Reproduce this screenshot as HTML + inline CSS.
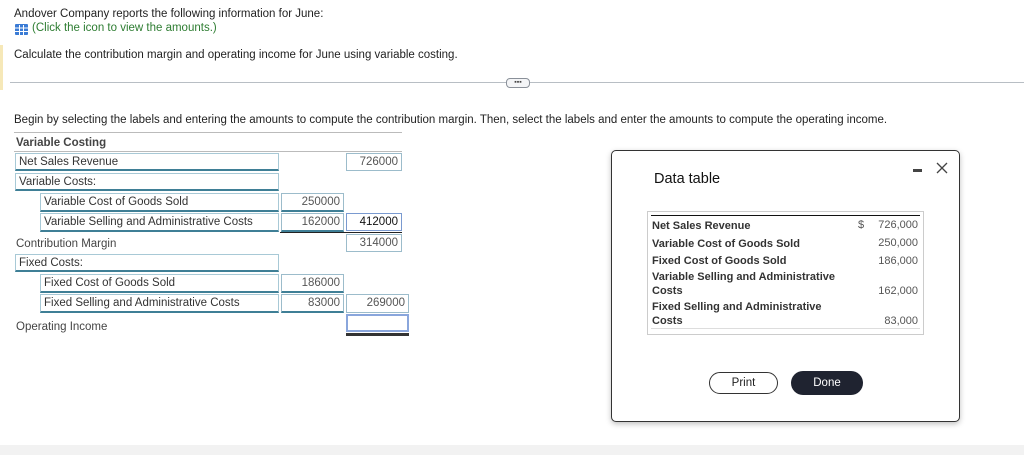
<!DOCTYPE html>
<html><head><style>
body{margin:0;width:1024px;height:455px;position:relative;background:#fff;font-family:"Liberation Sans",Arial,sans-serif;color:#222;overflow:hidden}
.a{position:absolute;white-space:nowrap}
.t{font-size:11.5px}
.box{position:absolute;border:1px solid #6fa3b5;box-sizing:border-box;font-size:11.5px;color:#333;padding:2px 3px;line-height:13px;background:#fff}
.lbl{border-color:#a8c9d6;border-bottom:2px solid #3f7f96}
.num{text-align:right;border-color:#9cbccb;color:#555}
.dt{font-size:11px;font-weight:bold;color:#333}
.dn{font-size:11px;color:#555;text-align:right}
</style></head><body>
<div class="a t" style="left:14px;top:8px">Andover Company reports the following information for June:</div>
<svg class="a" style="left:15px;top:24px" width="13" height="11"><rect x="0" y="0" width="13" height="11" rx="1" fill="#3a7bd5"/><g stroke="#fff" stroke-width="1"><line x1="0" y1="4" x2="13" y2="4"/><line x1="0" y1="7.5" x2="13" y2="7.5"/><line x1="4.5" y1="1" x2="4.5" y2="11"/><line x1="8.5" y1="1" x2="8.5" y2="11"/></g></svg>
<div class="a t" style="left:32px;top:22px;color:#2e7d32">(Click the icon to view the amounts.)</div>
<div class="a" style="left:0;top:45px;width:3px;height:45px;background:#f6e8b8"></div>
<div class="a t" style="left:14px;top:49px">Calculate the contribution margin and operating income for June using variable costing.</div>
<div class="a" style="left:10px;top:82px;width:1014px;height:1px;background:#b8bec4"></div>
<div class="a" style="left:506px;top:78px;width:22px;height:8px;border:1px solid #8a9099;border-radius:4px;background:#f4f5f7;font-size:7px;line-height:7px;text-align:center;color:#444">▪▪▪</div>
<div class="a t" style="left:14px;top:114px">Begin by selecting the labels and entering the amounts to compute the contribution margin. Then, select the labels and enter the amounts to compute the operating income.</div>
<div class="a" style="left:14px;top:132px;width:388px;height:1px;background:#bbb"></div>
<div class="a" style="left:16px;top:137px;font-size:11.5px;font-weight:bold;color:#444">Variable Costing</div>
<div class="a" style="left:14px;top:151px;width:388px;height:1px;background:#bbb"></div>

<div class="box lbl" style="left:15px;top:153px;width:264px;height:18px">Net Sales Revenue</div>
<div class="box num" style="left:346px;top:153px;width:56px;height:18px">726000</div>
<div class="box lbl" style="left:15px;top:173px;width:264px;height:18px">Variable Costs:</div>
<div class="box lbl" style="left:40px;top:193px;width:239px;height:19px">Variable Cost of Goods Sold</div>
<div class="box num" style="left:281px;top:193px;width:63px;height:19px;border-bottom:2px solid #3f7f96">250000</div>
<div class="box lbl" style="left:40px;top:213px;width:239px;height:19px">Variable Selling and Administrative Costs</div>
<div class="box num" style="left:281px;top:213px;width:63px;height:19px;border-bottom:2px solid #3f7f96">162000</div>
<div class="box num" style="left:346px;top:213px;width:56px;height:18px;border-color:#7a9ad0;color:#111">412000</div>
<div class="a" style="left:280px;top:232px;width:122px;height:1px;background:#222"></div>
<div class="a t" style="left:16px;top:238px;color:#444">Contribution Margin</div>
<div class="box num" style="left:346px;top:234px;width:56px;height:18px">314000</div>
<div class="box lbl" style="left:15px;top:254px;width:264px;height:18px">Fixed Costs:</div>
<div class="box lbl" style="left:40px;top:274px;width:239px;height:19px">Fixed Cost of Goods Sold</div>
<div class="box num" style="left:281px;top:274px;width:63px;height:19px;border-bottom:2px solid #3f7f96">186000</div>
<div class="box lbl" style="left:40px;top:294px;width:239px;height:19px">Fixed Selling and Administrative Costs</div>
<div class="box num" style="left:281px;top:294px;width:63px;height:19px;border-bottom:2px solid #3f7f96">83000</div>
<div class="box num" style="left:346px;top:294px;width:63px;height:19px">269000</div>
<div class="a t" style="left:16px;top:321px;color:#444">Operating Income</div>
<div class="box" style="left:346px;top:314px;width:63px;height:18px;border:2px solid #8aa6dc"></div>
<div class="a" style="left:346px;top:333px;width:63px;height:3px;background:#333"></div>

<div class="a" style="left:611px;top:150px;width:349px;height:272px;border:1.5px solid #333;border-radius:5px;box-sizing:border-box;box-shadow:0 2px 6px rgba(0,0,0,.25);background:#fff"></div>
<div class="a" style="left:654px;top:171px;font-size:14.5px;color:#111">Data table</div>
<div class="a" style="left:913px;top:169px;width:9px;height:3px;background:#444"></div>
<svg class="a" style="left:936px;top:162px" width="12" height="12"><path d="M1 1L11 11M11 1L1 11" stroke="#444" stroke-width="1.3"/></svg>
<div class="a" style="left:647px;top:211px;width:277px;height:124px;border:1px solid #ccc;box-sizing:border-box"></div>
<div class="a" style="left:651px;top:215px;width:269px;height:1px;background:#111"></div>
<div class="a" style="left:651px;top:328px;width:269px;height:1px;background:#ddd"></div>
<div class="a dt" style="left:652px;top:220px">Net Sales Revenue</div>
<div class="a dn" style="left:858px;top:219px">$</div>
<div class="a dn" style="left:868px;top:219px;width:50px">726,000</div>
<div class="a dt" style="left:652px;top:238px">Variable Cost of Goods Sold</div>
<div class="a dn" style="left:868px;top:237px;width:50px">250,000</div>
<div class="a dt" style="left:652px;top:255px">Fixed Cost of Goods Sold</div>
<div class="a dn" style="left:868px;top:255px;width:50px">186,000</div>
<div class="a dt" style="left:652px;top:271px">Variable Selling and Administrative</div>
<div class="a dt" style="left:652px;top:285px">Costs</div>
<div class="a dn" style="left:868px;top:285px;width:50px">162,000</div>
<div class="a dt" style="left:652px;top:301px">Fixed Selling and Administrative</div>
<div class="a dt" style="left:652px;top:315px">Costs</div>
<div class="a dn" style="left:868px;top:315px;width:50px">83,000</div>
<div class="a" style="left:709px;top:372px;width:69px;height:22px;border:1px solid #333;border-radius:11px;box-sizing:border-box;font-size:11.5px;line-height:20px;text-align:center;color:#222">Print</div>
<div class="a" style="left:791px;top:371px;width:72px;height:24px;background:#1f2330;border-radius:12px;font-size:11.5px;line-height:24px;text-align:center;color:#fff">Done</div>
<div class="a" style="left:0;top:445px;width:1024px;height:10px;background:#f2f2f2"></div>
</body></html>
